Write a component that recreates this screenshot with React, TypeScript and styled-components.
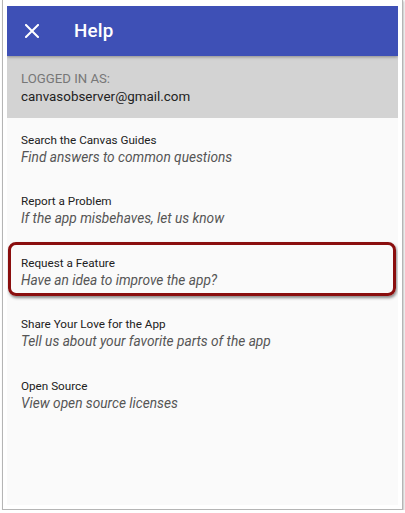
import { createGlobalStyle, styled } from "styled-components"

const GlobalStyle = createGlobalStyle`
  html, body {
    margin: 0;
    padding: 0;
    background: #ffffff;
  }
  body {
    font-family: Roboto, "Liberation Sans", Arial, sans-serif;
  }
`

const items = [
  { title: "Search the Canvas Guides", subtitle: "Find answers to common questions" },
  { title: "Report a Problem", subtitle: "If the app misbehaves, let us know" },
  { title: "Request a Feature", subtitle: "Have an idea to improve the app?", highlighted: true },
  { title: "Share Your Love for the App", subtitle: "Tell us about your favorite parts of the app" },
  { title: "Open Source", subtitle: "View open source licenses" },
]

export default function App() {
  return (
    <>
      <GlobalStyle />
      <Frame>
        <Screen>
          <Toolbar>
            <CloseButton aria-label="Close">
              <svg width="14" height="14" viewBox="0 0 14 14">
                <path d="M1 1 L13 13 M13 1 L1 13" stroke="#ffffff" strokeWidth="2" strokeLinecap="square" />
              </svg>
            </CloseButton>
            <Title>Help</Title>
          </Toolbar>

          <Account>
            <AccountLabel>LOGGED IN AS:</AccountLabel>
            <AccountEmail>canvasobserver@gmail.com</AccountEmail>
          </Account>

          <List>
            {items.map((item) => (
              <Item key={item.title} $highlighted={item.highlighted}>
                <ItemTitle>{item.title}</ItemTitle>
                <ItemSubtitle>{item.subtitle}</ItemSubtitle>
              </Item>
            ))}
          </List>
        </Screen>
      </Frame>
    </>
  )
}

const Frame = styled.div`
  box-sizing: border-box;
  margin-left: 2px;
  width: 401px;
  height: 510px;
  padding: 6px 4px 4px 4px;
  border: 1px solid #b5b5b5;
  border-top: none;
  box-shadow: 1px 1px 2px rgba(0, 0, 0, 0.25);
`

const Screen = styled.div`
  width: 391px;
  height: 499px;
  display: flex;
  flex-direction: column;
  background: #fafafa;
  overflow: hidden;
`

const Toolbar = styled.div`
  position: relative;
  z-index: 1;
  height: 50px;
  flex-shrink: 0;
  display: flex;
  align-items: center;
  background: #3e50b6;
  box-shadow: 0 1px 3px rgba(0, 0, 0, 0.35);
`

const CloseButton = styled.div`
  width: 50px;
  display: flex;
  justify-content: center;
  align-items: center;
`

const Title = styled.h1`
  margin: 0 0 0 17px;
  color: #ffffff;
  font-size: 18.8px;
  font-weight: 500;
  letter-spacing: 0.2px;
`

const Account = styled.div`
  height: 62px;
  flex-shrink: 0;
  box-sizing: border-box;
  padding: 15px 14px 0 14px;
  background: #d3d3d3;
  display: flex;
  flex-direction: column;
`

const AccountLabel = styled.span`
  color: #777777;
  font-size: 13.2px;
  line-height: 16px;
`

const AccountEmail = styled.span`
  color: #222222;
  font-size: 13.4px;
  line-height: 20px;
`

const List = styled.div`
  display: flex;
  flex-direction: column;
  padding-top: 12px;
`

const Item = styled.div<{ $highlighted?: boolean }>`
  position: relative;
  height: 61.4px;
  box-sizing: border-box;
  padding: 2px 14px 0 14px;
  display: flex;
  flex-direction: column;

  ${(p) =>
    p.$highlighted &&
    `
    &::after {
      content: "";
      position: absolute;
      left: 1px;
      right: 2px;
      top: -11px;
      bottom: 18px;
      border: 3px solid #8a0e0e;
      border-radius: 8px;
      box-shadow: 1px 2px 3px rgba(0, 0, 0, 0.45);
    }
  `}
`

const ItemTitle = styled.span`
  color: #212121;
  font-size: 11.7px;
  line-height: 16px;
`

const ItemSubtitle = styled.span`
  color: #555555;
  font-size: 13.7px;
  font-style: italic;
  line-height: 19px;
`
